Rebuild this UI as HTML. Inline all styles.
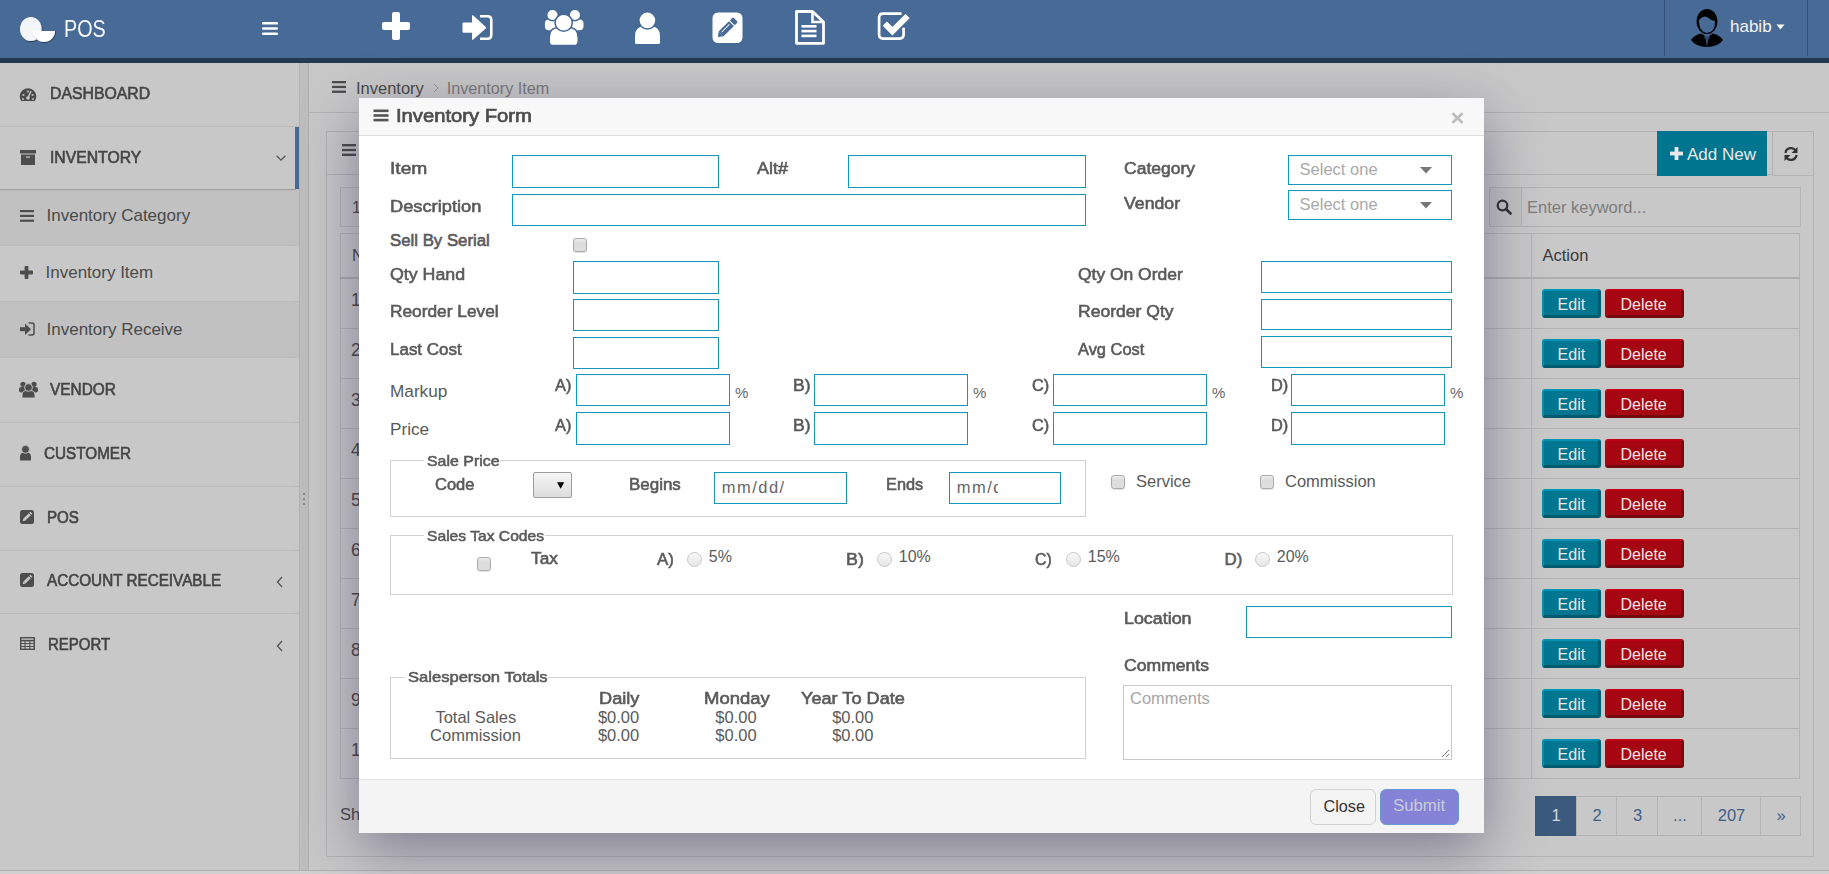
<!DOCTYPE html>
<html><head><meta charset="utf-8"><title>POS</title>
<style>
html,body{margin:0;padding:0;width:1829px;height:874px;overflow:hidden;background:#c8c8c8;font-family:"Liberation Sans",sans-serif;}
.r{position:absolute;box-sizing:border-box;}
.t{position:absolute;white-space:nowrap;line-height:1;}
</style></head><body>
<div class="r" style="left:0px;top:0px;width:1829px;height:58px;background:#476a96"></div>
<div class="r" style="left:0px;top:58px;width:1829px;height:5px;background:#243850"></div>
<svg class="r" style="left:16px;top:14px;" width="44" height="32" viewBox="0 0 44 32"><defs><filter id="sh" x="-20%" y="-20%" width="140%" height="140%"><feDropShadow dx="0.6" dy="0.8" stdDeviation="0.5" flood-color="#000" flood-opacity="0.6"/></filter></defs><ellipse cx="14.8" cy="15" rx="10.8" ry="12" fill="#f3f5f8" filter="url(#sh)"/><path d="M17 17 L39 17 A11 11 0 0 1 17 17 Z" fill="#fff" filter="url(#sh)"/></svg>
<div class="t" style="left:63.5px;top:18.1px;font-size:23.5px;font-weight:normal;color:#f6f8fb;transform:scaleX(0.84);transform-origin:0 0;">POS</div>
<svg class="r" style="left:262px;top:22px;" width="16" height="13" viewBox="0 0 16 13"><rect x="0" y="0" width="16" height="2.6" rx="1.2" fill="#fff"/><rect x="0" y="5.2" width="16" height="2.6" rx="1.2" fill="#fff"/><rect x="0" y="10.4" width="16" height="2.6" rx="1.2" fill="#fff"/></svg>
<svg class="r" style="left:382px;top:12px;" width="28" height="28" viewBox="0 0 28 28"><rect x="10" y="0" width="8" height="28" rx="2" fill="#fff"/><rect x="0" y="10" width="28" height="8" rx="2" fill="#fff"/></svg>
<svg class="r" style="left:460px;top:13px;" width="36" height="30" viewBox="0 0 36 30"><rect x="2.5" y="9.5" width="11" height="10.3" rx="1" fill="#fff"/><path d="M12.6 2.8 L25.6 14.7 L12.6 26.2 Z" fill="#fff" stroke="#fff" stroke-width="1.2" stroke-linejoin="round"/><path d="M20 3.3 H27.5 Q31.3 3.3 31.3 7.3 V21.7 Q31.3 25.7 27.5 25.7 H20" fill="none" stroke="#fff" stroke-width="2.6"/></svg>
<svg class="r" style="left:543px;top:8px;" width="42" height="40" viewBox="0 0 42 40"><rect x="1.9" y="11.5" width="11.5" height="10.8" rx="4" fill="#fff"/><rect x="29" y="11.5" width="11.5" height="10.8" rx="4" fill="#fff"/><circle cx="9.5" cy="7" r="5.8" fill="#fff" stroke="#476a96" stroke-width="1.4"/><circle cx="31.9" cy="7" r="5.8" fill="#fff" stroke="#476a96" stroke-width="1.4"/><path d="M6.2 33.2 V29.5 Q6.2 19.6 16 19.6 H25.5 Q35.2 19.6 35.2 29.5 V33.2 Q35.2 37.6 31 37.6 H10.4 Q6.2 37.6 6.2 33.2 Z" fill="#fff" stroke="#476a96" stroke-width="1.5"/><circle cx="20.7" cy="14.7" r="8.6" fill="#fff" stroke="#476a96" stroke-width="1.6"/></svg>
<svg class="r" style="left:633px;top:11px;" width="29" height="34" viewBox="0 0 29 34"><path d="M2 32 V25 Q2 15.5 11 15.5 H18 Q27 15.5 27 25 V32 Q27 33 25.5 33 H3.5 Q2 33 2 32 Z" fill="#fff"/><circle cx="14.4" cy="9.4" r="8.6" fill="#fff" stroke="#476a96" stroke-width="1.6"/></svg>
<svg class="r" style="left:712px;top:12px;" width="31" height="32" viewBox="0 0 31 32"><rect x="0.5" y="0.5" width="30" height="30.5" rx="5.5" fill="#fff"/><g transform="rotate(-45 15.5 15.5)"><rect x="6.5" y="12" width="14.5" height="7" fill="#476a96"/><rect x="22.2" y="12" width="4.6" height="7" rx="1.2" fill="#476a96"/><path d="M6.5 12 L2 15.5 L6.5 19 Z" fill="#476a96"/><rect x="8" y="14.2" width="11" height="0.9" fill="#fff"/></g></svg>
<svg class="r" style="left:794px;top:9px;" width="33" height="37" viewBox="0 0 33 37"><path d="M2.5 2.5 H18.5 L29.5 13 V34.3 H2.5 Z" fill="none" stroke="#fff" stroke-width="2.8" stroke-linejoin="round"/><path d="M18.5 2.5 V13 H29.5" fill="none" stroke="#fff" stroke-width="2.6"/><rect x="7.5" y="16" width="15" height="2.6" fill="#fff"/><rect x="7.5" y="20.8" width="15" height="2.6" fill="#fff"/><rect x="7.5" y="25.6" width="15" height="2.6" fill="#fff"/></svg>
<svg class="r" style="left:876px;top:11px;" width="36" height="31" viewBox="0 0 36 31"><path d="M25.5 2.6 H7.1 Q3.1 2.6 3.1 6.6 V23.6 Q3.1 27.6 7.1 27.6 H23.6 Q27.6 27.6 27.6 23.6 V16.8" fill="none" stroke="#fff" stroke-width="2.7"/><path d="M8.8 12.6 L16.4 20.2 L31.6 5" fill="none" stroke="#fff" stroke-width="6" stroke-linejoin="miter"/></svg>
<div class="r" style="left:1664px;top:0px;width:1px;height:56px;background:#34527a"></div>
<div class="r" style="left:1807px;top:0px;width:1px;height:56px;background:#34527a"></div>
<svg class="r" style="left:1690px;top:6px;" width="34" height="42" viewBox="0 0 34 42"><path d="M1 34 Q4 29 11 27.5 L17 31 L23 27.5 Q30 29 33 34 Q28 41 17 41 Q6 41 1 34 Z" fill="#000"/><path d="M15 30 L17 41 L19 30 Z" fill="#2e4d72"/><path d="M13.5 28 L17 31.5 L20.5 28 L19 33 L17 31.5 L15 33Z" fill="#2e4d72"/><ellipse cx="17" cy="15.5" rx="10.4" ry="12.6" fill="#000"/><path d="M9 14 Q13 9 17 11 Q21 14.5 25 15 Q25.5 26 17 27 Q8.5 26 9 14 Z" fill="#476a96"/></svg>
<div class="t" style="left:1730.0px;top:17.6px;font-size:17px;font-weight:normal;color:#f4f4f4;">habib</div>
<svg class="r" style="left:1776px;top:24px;" width="9" height="6" viewBox="0 0 9 6"><path d="M0.5 0.5 L8.5 0.5 L4.5 5.5 Z" fill="#fff"/></svg>
<div class="r" style="left:0px;top:63px;width:299px;height:811px;background:#c8c8c8"></div>
<div class="r" style="left:0px;top:126px;width:299px;height:1px;background:#bbbbbb"></div>
<div class="r" style="left:0px;top:189px;width:299px;height:56px;background:#c1c1c1"></div>
<div class="r" style="left:0px;top:301px;width:299px;height:56px;background:#c1c1c1"></div>
<div class="r" style="left:0px;top:189px;width:296px;height:1px;background:#a0a0a0"></div>
<div class="r" style="left:0px;top:190px;width:296px;height:1px;background:#bdbdbd"></div>
<div class="r" style="left:0px;top:245px;width:299px;height:1px;background:#bbbbbb"></div>
<div class="r" style="left:0px;top:301px;width:299px;height:1px;background:#bbbbbb"></div>
<div class="r" style="left:0px;top:357px;width:299px;height:1px;background:#bbbbbb"></div>
<div class="r" style="left:0px;top:422px;width:299px;height:1px;background:#bbbbbb"></div>
<div class="r" style="left:0px;top:486px;width:299px;height:1px;background:#bbbbbb"></div>
<div class="r" style="left:0px;top:550px;width:299px;height:1px;background:#bbbbbb"></div>
<div class="r" style="left:0px;top:613px;width:299px;height:1px;background:#bbbbbb"></div>
<div class="r" style="left:295px;top:127px;width:4px;height:62px;background:#476a96"></div>
<div class="r" style="left:299px;top:63px;width:1px;height:811px;background:#b4b4b4"></div>
<div class="r" style="left:300px;top:63px;width:8px;height:811px;background:#bebebe"></div>
<div class="r" style="left:308px;top:63px;width:1px;height:811px;background:#b0b0b0"></div>
<div class="r" style="left:303px;top:493px;width:2px;height:2px;background:#8a8a8a"></div>
<div class="r" style="left:303px;top:498px;width:2px;height:2px;background:#8a8a8a"></div>
<div class="r" style="left:303px;top:503px;width:2px;height:2px;background:#8a8a8a"></div>
<svg class="r" style="left:19px;top:87px;" width="18" height="15" viewBox="0 0 18 15"><path d="M2.2 14 A8.2 8.2 0 1 1 15.8 14 Z" fill="#4d4d4d"/><circle cx="9" cy="11" r="1.8" fill="#c8c8c8"/><path d="M9 11 L12 4" stroke="#c8c8c8" stroke-width="1.4"/><circle cx="4.5" cy="8" r="1" fill="#c8c8c8"/><circle cx="9" cy="4.5" r="1" fill="#c8c8c8"/><circle cx="13.5" cy="8" r="1" fill="#c8c8c8"/><circle cx="4" cy="12" r="0.9" fill="#c8c8c8"/><circle cx="14" cy="12" r="0.9" fill="#c8c8c8"/></svg>
<div class="t" style="left:49.6px;top:85.0px;font-size:17.2px;font-weight:normal;color:#454545;-webkit-text-stroke:0.65px #454545;transform:scaleX(0.9205);transform-origin:0 0;">DASHBOARD</div>
<svg class="r" style="left:20px;top:150px;" width="16" height="15" viewBox="0 0 16 15"><rect x="0" y="0" width="16" height="3.5" fill="#4d4d4d"/><rect x="1" y="4.5" width="14" height="10.5" fill="#4d4d4d"/><rect x="6" y="6.5" width="4" height="1.2" fill="#c8c8c8"/></svg>
<div class="t" style="left:49.6px;top:149.4px;font-size:17.2px;font-weight:normal;color:#454545;-webkit-text-stroke:0.65px #454545;transform:scaleX(0.9151);transform-origin:0 0;">INVENTORY</div>
<svg class="r" style="left:275px;top:154px;" width="12" height="8" viewBox="0 0 12 8"><path d="M1.6 1.8 L6 6.2 L10.4 1.8" fill="none" stroke="#555" stroke-width="1.3"/></svg>
<svg class="r" style="left:20px;top:210px;" width="14" height="12" viewBox="0 0 14 12"><rect x="0" y="0" width="14" height="2.2" fill="#4d4d4d"/><rect x="0" y="4.8" width="14" height="2.2" fill="#4d4d4d"/><rect x="0" y="9.6" width="14" height="2.2" fill="#4d4d4d"/></svg>
<div class="t" style="left:46.5px;top:207.1px;font-size:17px;font-weight:normal;color:#4a4a4a;">Inventory Category</div>
<svg class="r" style="left:20px;top:266px;" width="13" height="13" viewBox="0 0 13 13"><rect x="4.6" y="0" width="3.8" height="13" rx="0.8" fill="#4d4d4d"/><rect x="0" y="4.6" width="13" height="3.8" rx="0.8" fill="#4d4d4d"/></svg>
<div class="t" style="left:45.5px;top:264.3px;font-size:17px;font-weight:normal;color:#4a4a4a;">Inventory Item</div>
<svg class="r" style="left:19px;top:322px;" width="16" height="14" viewBox="0 0 16 14"><rect x="1" y="5.2" width="6" height="4" fill="#4d4d4d"/><path d="M6 1.5 L12 7.2 L6 13 Z" fill="#4d4d4d"/><path d="M9.5 1 H13 Q15 1 15 3 V11 Q15 13 13 13 H9.5" fill="none" stroke="#4d4d4d" stroke-width="1.5"/></svg>
<div class="t" style="left:46.5px;top:320.6px;font-size:17px;font-weight:normal;color:#4a4a4a;">Inventory Receive</div>
<svg class="r" style="left:19px;top:381px;" width="19" height="17" viewBox="0 0 19 17"><circle cx="4" cy="3.3" r="2.6" fill="#4d4d4d"/><circle cx="15" cy="3.3" r="2.6" fill="#4d4d4d"/><rect x="0" y="6" width="6.5" height="5.5" rx="2.2" fill="#4d4d4d"/><rect x="12.5" y="6" width="6.5" height="5.5" rx="2.2" fill="#4d4d4d"/><path d="M3 17 V14 Q3 9.5 8 9.5 H11 Q16 9.5 16 14 V17 Z" fill="#4d4d4d" stroke="#c8c8c8" stroke-width="0.9"/><circle cx="9.5" cy="6.5" r="3.9" fill="#4d4d4d" stroke="#c8c8c8" stroke-width="0.9"/></svg>
<div class="t" style="left:50.0px;top:380.7px;font-size:17.2px;font-weight:normal;color:#454545;-webkit-text-stroke:0.65px #454545;transform:scaleX(0.8957);transform-origin:0 0;">VENDOR</div>
<svg class="r" style="left:19px;top:445px;" width="13" height="16" viewBox="0 0 13 16"><path d="M1 15.5 V12 Q1 7.5 5 7.5 H8 Q12 7.5 12 12 V15.5 Z" fill="#4d4d4d"/><circle cx="6.5" cy="4.3" r="4" fill="#4d4d4d" stroke="#c8c8c8" stroke-width="0.9"/></svg>
<div class="t" style="left:44.0px;top:444.8px;font-size:17.2px;font-weight:normal;color:#454545;-webkit-text-stroke:0.65px #454545;transform:scaleX(0.8878);transform-origin:0 0;">CUSTOMER</div>
<svg class="r" style="left:20px;top:510px;" width="14" height="14" viewBox="0 0 14 14"><rect x="0" y="0" width="14" height="14" rx="2.5" fill="#4d4d4d"/><g transform="rotate(-45 7 7)"><rect x="3" y="5.6" width="8" height="2.8" fill="#c8c8c8"/><rect x="11.6" y="5.6" width="1.6" height="2.8" fill="#c8c8c8"/><path d="M3 5.6 L1 7 L3 8.4Z" fill="#c8c8c8"/></g></svg>
<div class="t" style="left:47.0px;top:508.6px;font-size:17.2px;font-weight:normal;color:#454545;-webkit-text-stroke:0.65px #454545;transform:scaleX(0.8804);transform-origin:0 0;">POS</div>
<svg class="r" style="left:20px;top:573px;" width="14" height="14" viewBox="0 0 14 14"><rect x="0" y="0" width="14" height="14" rx="2.5" fill="#4d4d4d"/><g transform="rotate(-45 7 7)"><rect x="3" y="5.6" width="8" height="2.8" fill="#c8c8c8"/><rect x="11.6" y="5.6" width="1.6" height="2.8" fill="#c8c8c8"/><path d="M3 5.6 L1 7 L3 8.4Z" fill="#c8c8c8"/></g></svg>
<div class="t" style="left:47.0px;top:571.9px;font-size:17.2px;font-weight:normal;color:#454545;-webkit-text-stroke:0.65px #454545;transform:scaleX(0.8883);transform-origin:0 0;">ACCOUNT RECEIVABLE</div>
<svg class="r" style="left:276px;top:639.5px;" width="8" height="12" viewBox="0 0 8 12"><path d="M6 1 L1.5 6 L6 11" fill="none" stroke="#555" stroke-width="1.3"/></svg>
<svg class="r" style="left:276px;top:575.5px;" width="8" height="12" viewBox="0 0 8 12"><path d="M6 1 L1.5 6 L6 11" fill="none" stroke="#555" stroke-width="1.3"/></svg>
<svg class="r" style="left:20px;top:637px;" width="15" height="13" viewBox="0 0 15 13"><rect x="0.7" y="0.7" width="13.6" height="11.6" fill="none" stroke="#4d4d4d" stroke-width="1.4"/><path d="M0.6 3.6 H14.4" stroke="#4d4d4d" stroke-width="1.6"/><path d="M0.6 6.6 H14.4 M0.6 9.5 H14.4 M5 3 V12.4 M9.8 3 V12.4" stroke="#4d4d4d" stroke-width="1"/></svg>
<div class="t" style="left:48.0px;top:635.9px;font-size:17.2px;font-weight:normal;color:#454545;-webkit-text-stroke:0.65px #454545;transform:scaleX(0.8735);transform-origin:0 0;">REPORT</div>
<div class="r" style="left:309px;top:63px;width:1520px;height:811px;background:#c8c8c8"></div>
<svg class="r" style="left:332px;top:81px;" width="14" height="12" viewBox="0 0 14 12"><rect x="0" y="0" width="14" height="2.3" fill="#4d4d4d"/><rect x="0" y="4.8" width="14" height="2.3" fill="#4d4d4d"/><rect x="0" y="9.6" width="14" height="2.3" fill="#4d4d4d"/></svg>
<div class="t" style="left:356.0px;top:79.5px;font-size:16.5px;font-weight:normal;color:#4a4a4a;">Inventory</div>
<svg class="r" style="left:433px;top:83px;" width="6" height="10" viewBox="0 0 6 10"><path d="M1 1 L5 5 L1 9" fill="none" stroke="#9a9a9a" stroke-width="1"/></svg>
<div class="t" style="left:446.7px;top:79.6px;font-size:16.2px;font-weight:normal;color:#7a7a7a;">Inventory Item</div>
<div class="r" style="left:309px;top:112px;width:1520px;height:1px;background:#b3b3b3"></div>
<div class="r" style="left:326px;top:131px;width:1488px;height:726px;border:1px solid #b3b3b3;"></div>
<div class="r" style="left:326px;top:174px;width:1488px;height:1px;background:#b3b3b3"></div>
<svg class="r" style="left:342px;top:144px;" width="14" height="12" viewBox="0 0 14 12"><rect x="0" y="0" width="14" height="2.4" fill="#4d4d4d"/><rect x="0" y="4.8" width="14" height="2.4" fill="#4d4d4d"/><rect x="0" y="9.6" width="14" height="2.4" fill="#4d4d4d"/></svg>
<div class="r" style="left:1657px;top:131px;width:110px;height:45px;background:#00758f"></div>
<svg class="r" style="left:1670px;top:147px;" width="13" height="13" viewBox="0 0 13 13"><rect x="4.6" y="0" width="3.8" height="13" fill="#e8e8e8"/><rect x="0" y="4.6" width="13" height="3.8" fill="#e8e8e8"/></svg>
<div class="t" style="left:1687.0px;top:146.0px;font-size:17px;font-weight:normal;color:#e8e8e8;">Add New</div>
<div class="r" style="left:1772px;top:131px;width:42px;height:45px;background:#c8c8c8;border:1px solid #b3b3b3;"></div>
<svg class="r" style="left:1783px;top:146px;" width="16" height="16" viewBox="0 0 16 16"><path d="M2.5 7 A5.5 5.5 0 0 1 12.8 5" fill="none" stroke="#333" stroke-width="2.3"/><path d="M14.5 1 V7 H8.5 Z" fill="#333"/><path d="M13.5 9 A5.5 5.5 0 0 1 3.2 11" fill="none" stroke="#333" stroke-width="2.3"/><path d="M1.5 15 V9 H7.5 Z" fill="#333"/></svg>
<div class="r" style="left:340px;top:187px;width:60px;height:40px;border:1px solid #b3b3b3;background:#c6c6c6"></div>
<div class="t" style="left:352.0px;top:199.5px;font-size:16px;font-weight:normal;color:#4a4a4a;">1</div>
<div class="r" style="left:1489px;top:187px;width:312px;height:40px;border:1px solid #b3b3b3;background:#c8c8c8"></div>
<div class="r" style="left:1489px;top:187px;width:33px;height:40px;border:1px solid #b3b3b3;background:#c3c3c3"></div>
<svg class="r" style="left:1496px;top:199px;" width="17" height="16" viewBox="0 0 17 16"><circle cx="6.5" cy="6.5" r="4.8" fill="none" stroke="#333" stroke-width="2.2"/><path d="M10 10 L14.5 14.5" stroke="#333" stroke-width="2.6" stroke-linecap="round"/></svg>
<div class="t" style="left:1527.0px;top:199.0px;font-size:16.5px;font-weight:normal;color:#7d7d7d;">Enter keyword...</div>
<div class="r" style="left:340px;top:233px;width:1460px;height:546px;border:1px solid #b3b3b3;"></div>
<div class="r" style="left:340px;top:277px;width:1460px;height:2px;background:#aeaeae"></div>
<div class="r" style="left:1531px;top:233px;width:1px;height:546px;background:#b3b3b3"></div>
<div class="t" style="left:352.0px;top:247.2px;font-size:16.5px;font-weight:normal;color:#4a4a4a;">N</div>
<div class="t" style="left:1542.5px;top:247.2px;font-size:16.5px;font-weight:normal;color:#3a3a3a;">Action</div>
<div class="t" style="left:351.0px;top:292.0px;font-size:17.5px;font-weight:normal;color:#4a4a4a;">1</div>
<div class="r" style="left:1542px;top:289px;width:59px;height:29px;background:#007690;border-radius:3px;border-style:solid;border-width:2px 3px 3px 2px;border-color:#0094b4 #005b6f #005b6f #0090b0;"></div>
<div class="t" style="left:1557.6px;top:296.5px;font-size:16px;font-weight:normal;color:#ece6e6;">Edit</div>
<div class="r" style="left:1605px;top:289px;width:79px;height:29px;background:#a60612;border-radius:3px;border-style:solid;border-width:2px 3px 3px 2px;border-color:#c00014 #730a10 #730a10 #bb0013;"></div>
<div class="t" style="left:1620.5px;top:296.5px;font-size:16px;font-weight:normal;color:#ece6e6;">Delete</div>
<div class="r" style="left:340px;top:328px;width:1460px;height:1px;background:#b3b3b3"></div>
<div class="t" style="left:351.0px;top:342.0px;font-size:17.5px;font-weight:normal;color:#4a4a4a;">2</div>
<div class="r" style="left:1542px;top:339px;width:59px;height:29px;background:#007690;border-radius:3px;border-style:solid;border-width:2px 3px 3px 2px;border-color:#0094b4 #005b6f #005b6f #0090b0;"></div>
<div class="t" style="left:1557.6px;top:346.5px;font-size:16px;font-weight:normal;color:#ece6e6;">Edit</div>
<div class="r" style="left:1605px;top:339px;width:79px;height:29px;background:#a60612;border-radius:3px;border-style:solid;border-width:2px 3px 3px 2px;border-color:#c00014 #730a10 #730a10 #bb0013;"></div>
<div class="t" style="left:1620.5px;top:346.5px;font-size:16px;font-weight:normal;color:#ece6e6;">Delete</div>
<div class="r" style="left:340px;top:378px;width:1460px;height:1px;background:#b3b3b3"></div>
<div class="t" style="left:351.0px;top:392.0px;font-size:17.5px;font-weight:normal;color:#4a4a4a;">3</div>
<div class="r" style="left:1542px;top:389px;width:59px;height:29px;background:#007690;border-radius:3px;border-style:solid;border-width:2px 3px 3px 2px;border-color:#0094b4 #005b6f #005b6f #0090b0;"></div>
<div class="t" style="left:1557.6px;top:396.5px;font-size:16px;font-weight:normal;color:#ece6e6;">Edit</div>
<div class="r" style="left:1605px;top:389px;width:79px;height:29px;background:#a60612;border-radius:3px;border-style:solid;border-width:2px 3px 3px 2px;border-color:#c00014 #730a10 #730a10 #bb0013;"></div>
<div class="t" style="left:1620.5px;top:396.5px;font-size:16px;font-weight:normal;color:#ece6e6;">Delete</div>
<div class="r" style="left:340px;top:428px;width:1460px;height:1px;background:#b3b3b3"></div>
<div class="t" style="left:351.0px;top:442.0px;font-size:17.5px;font-weight:normal;color:#4a4a4a;">4</div>
<div class="r" style="left:1542px;top:439px;width:59px;height:29px;background:#007690;border-radius:3px;border-style:solid;border-width:2px 3px 3px 2px;border-color:#0094b4 #005b6f #005b6f #0090b0;"></div>
<div class="t" style="left:1557.6px;top:446.5px;font-size:16px;font-weight:normal;color:#ece6e6;">Edit</div>
<div class="r" style="left:1605px;top:439px;width:79px;height:29px;background:#a60612;border-radius:3px;border-style:solid;border-width:2px 3px 3px 2px;border-color:#c00014 #730a10 #730a10 #bb0013;"></div>
<div class="t" style="left:1620.5px;top:446.5px;font-size:16px;font-weight:normal;color:#ece6e6;">Delete</div>
<div class="r" style="left:340px;top:478px;width:1460px;height:1px;background:#b3b3b3"></div>
<div class="t" style="left:351.0px;top:492.0px;font-size:17.5px;font-weight:normal;color:#4a4a4a;">5</div>
<div class="r" style="left:1542px;top:489px;width:59px;height:29px;background:#007690;border-radius:3px;border-style:solid;border-width:2px 3px 3px 2px;border-color:#0094b4 #005b6f #005b6f #0090b0;"></div>
<div class="t" style="left:1557.6px;top:496.5px;font-size:16px;font-weight:normal;color:#ece6e6;">Edit</div>
<div class="r" style="left:1605px;top:489px;width:79px;height:29px;background:#a60612;border-radius:3px;border-style:solid;border-width:2px 3px 3px 2px;border-color:#c00014 #730a10 #730a10 #bb0013;"></div>
<div class="t" style="left:1620.5px;top:496.5px;font-size:16px;font-weight:normal;color:#ece6e6;">Delete</div>
<div class="r" style="left:340px;top:528px;width:1460px;height:1px;background:#b3b3b3"></div>
<div class="t" style="left:351.0px;top:542.0px;font-size:17.5px;font-weight:normal;color:#4a4a4a;">6</div>
<div class="r" style="left:1542px;top:539px;width:59px;height:29px;background:#007690;border-radius:3px;border-style:solid;border-width:2px 3px 3px 2px;border-color:#0094b4 #005b6f #005b6f #0090b0;"></div>
<div class="t" style="left:1557.6px;top:546.5px;font-size:16px;font-weight:normal;color:#ece6e6;">Edit</div>
<div class="r" style="left:1605px;top:539px;width:79px;height:29px;background:#a60612;border-radius:3px;border-style:solid;border-width:2px 3px 3px 2px;border-color:#c00014 #730a10 #730a10 #bb0013;"></div>
<div class="t" style="left:1620.5px;top:546.5px;font-size:16px;font-weight:normal;color:#ece6e6;">Delete</div>
<div class="r" style="left:340px;top:578px;width:1460px;height:1px;background:#b3b3b3"></div>
<div class="t" style="left:351.0px;top:592.0px;font-size:17.5px;font-weight:normal;color:#4a4a4a;">7</div>
<div class="r" style="left:1542px;top:589px;width:59px;height:29px;background:#007690;border-radius:3px;border-style:solid;border-width:2px 3px 3px 2px;border-color:#0094b4 #005b6f #005b6f #0090b0;"></div>
<div class="t" style="left:1557.6px;top:596.5px;font-size:16px;font-weight:normal;color:#ece6e6;">Edit</div>
<div class="r" style="left:1605px;top:589px;width:79px;height:29px;background:#a60612;border-radius:3px;border-style:solid;border-width:2px 3px 3px 2px;border-color:#c00014 #730a10 #730a10 #bb0013;"></div>
<div class="t" style="left:1620.5px;top:596.5px;font-size:16px;font-weight:normal;color:#ece6e6;">Delete</div>
<div class="r" style="left:340px;top:628px;width:1460px;height:1px;background:#b3b3b3"></div>
<div class="t" style="left:351.0px;top:642.0px;font-size:17.5px;font-weight:normal;color:#4a4a4a;">8</div>
<div class="r" style="left:1542px;top:639px;width:59px;height:29px;background:#007690;border-radius:3px;border-style:solid;border-width:2px 3px 3px 2px;border-color:#0094b4 #005b6f #005b6f #0090b0;"></div>
<div class="t" style="left:1557.6px;top:646.5px;font-size:16px;font-weight:normal;color:#ece6e6;">Edit</div>
<div class="r" style="left:1605px;top:639px;width:79px;height:29px;background:#a60612;border-radius:3px;border-style:solid;border-width:2px 3px 3px 2px;border-color:#c00014 #730a10 #730a10 #bb0013;"></div>
<div class="t" style="left:1620.5px;top:646.5px;font-size:16px;font-weight:normal;color:#ece6e6;">Delete</div>
<div class="r" style="left:340px;top:678px;width:1460px;height:1px;background:#b3b3b3"></div>
<div class="t" style="left:351.0px;top:692.0px;font-size:17.5px;font-weight:normal;color:#4a4a4a;">9</div>
<div class="r" style="left:1542px;top:689px;width:59px;height:29px;background:#007690;border-radius:3px;border-style:solid;border-width:2px 3px 3px 2px;border-color:#0094b4 #005b6f #005b6f #0090b0;"></div>
<div class="t" style="left:1557.6px;top:696.5px;font-size:16px;font-weight:normal;color:#ece6e6;">Edit</div>
<div class="r" style="left:1605px;top:689px;width:79px;height:29px;background:#a60612;border-radius:3px;border-style:solid;border-width:2px 3px 3px 2px;border-color:#c00014 #730a10 #730a10 #bb0013;"></div>
<div class="t" style="left:1620.5px;top:696.5px;font-size:16px;font-weight:normal;color:#ece6e6;">Delete</div>
<div class="r" style="left:340px;top:728px;width:1460px;height:1px;background:#b3b3b3"></div>
<div class="t" style="left:351.0px;top:742.0px;font-size:17.5px;font-weight:normal;color:#4a4a4a;">1</div>
<div class="r" style="left:1542px;top:739px;width:59px;height:29px;background:#007690;border-radius:3px;border-style:solid;border-width:2px 3px 3px 2px;border-color:#0094b4 #005b6f #005b6f #0090b0;"></div>
<div class="t" style="left:1557.6px;top:746.5px;font-size:16px;font-weight:normal;color:#ece6e6;">Edit</div>
<div class="r" style="left:1605px;top:739px;width:79px;height:29px;background:#a60612;border-radius:3px;border-style:solid;border-width:2px 3px 3px 2px;border-color:#c00014 #730a10 #730a10 #bb0013;"></div>
<div class="t" style="left:1620.5px;top:746.5px;font-size:16px;font-weight:normal;color:#ece6e6;">Delete</div>
<div class="t" style="left:340.0px;top:806.0px;font-size:16.5px;font-weight:normal;color:#4a4a4a;">Showing</div>
<div class="r" style="left:1535px;top:796px;width:42px;height:40px;background:#3b5a7e;border:1px solid #3b5a7e"></div>
<div class="t" style="left:1535px;top:807px;width:42px;text-align:center;font-size:16.5px;color:#d3d9e1">1</div>
<div class="r" style="left:1576px;top:796px;width:41px;height:40px;border:1px solid #b3b3b3;background:#c8c8c8"></div>
<div class="t" style="left:1577px;top:807px;width:40px;text-align:center;font-size:16.5px;color:#3d5f87">2</div>
<div class="r" style="left:1616px;top:796px;width:42px;height:40px;border:1px solid #b3b3b3;background:#c8c8c8"></div>
<div class="t" style="left:1617px;top:807px;width:41px;text-align:center;font-size:16.5px;color:#3d5f87">3</div>
<div class="r" style="left:1657px;top:796px;width:45px;height:40px;border:1px solid #b3b3b3;background:#c8c8c8"></div>
<div class="t" style="left:1658px;top:807px;width:44px;text-align:center;font-size:16.5px;color:#3d5f87">...</div>
<div class="r" style="left:1701px;top:796px;width:60px;height:40px;border:1px solid #b3b3b3;background:#c8c8c8"></div>
<div class="t" style="left:1702px;top:807px;width:59px;text-align:center;font-size:16.5px;color:#3d5f87">207</div>
<div class="r" style="left:1760px;top:796px;width:41px;height:40px;border:1px solid #b3b3b3;background:#c8c8c8"></div>
<div class="t" style="left:1761px;top:807px;width:40px;text-align:center;font-size:16.5px;color:#3d5f87">»</div>
<div class="r" style="left:0px;top:870px;width:1829px;height:1px;background:#b0b0b0"></div>
<div class="r" style="left:0px;top:871px;width:1829px;height:3px;background:#d0d0d0"></div>
<div class="r" style="left:359px;top:98px;width:1125px;height:735px;background:#fff;box-shadow:0 18px 55px 0 rgba(30,25,70,0.42);"></div>
<div class="r" style="left:359px;top:98px;width:1125px;height:37px;background:#f8f8f8"></div>
<div class="r" style="left:359px;top:135px;width:1125px;height:1px;background:#dcdcdc"></div>
<svg class="r" style="left:373px;top:109px;" width="16" height="13" viewBox="0 0 16 13"><rect x="0.5" y="0.5" width="15" height="2.6" fill="#555"/><rect x="0.5" y="5.2" width="15" height="2.6" fill="#555"/><rect x="0.5" y="9.8" width="15" height="2.6" fill="#555"/></svg>
<div class="t" style="left:396.0px;top:107.1px;font-size:18.8px;font-weight:normal;color:#4d4d4d;-webkit-text-stroke:0.7px #4d4d4d;transform:scaleX(1.076);transform-origin:0 0;">Inventory Form</div>
<svg class="r" style="left:1451px;top:112px;" width="13" height="12" viewBox="0 0 13 12"><path d="M1.5 1.2 L11.5 10.8 M11.5 1.2 L1.5 10.8" stroke="#bcbcbc" stroke-width="2.6"/></svg>
<div class="r" style="left:359px;top:779px;width:1125px;height:54px;background:#f4f4f4"></div>
<div class="r" style="left:359px;top:779px;width:1125px;height:1px;background:#e4e4e4"></div>
<div class="t" style="left:390.0px;top:161.1px;font-size:16.8px;font-weight:normal;color:#5a5a5a;-webkit-text-stroke:0.6px #5a5a5a;transform:scaleX(1.1455);transform-origin:0 0;">Item</div>
<div class="r" style="left:512px;top:155px;width:207px;height:33px;border:1px solid #1497bd;background:#fff;box-shadow:inset 0 1px 1px rgba(0,0,0,0.04);"></div>
<div class="t" style="left:757.0px;top:161.2px;font-size:16.8px;font-weight:normal;color:#5a5a5a;-webkit-text-stroke:0.6px #5a5a5a;transform:scaleX(1.069);transform-origin:0 0;">Alt#</div>
<div class="r" style="left:848px;top:155px;width:238px;height:33px;border:1px solid #1497bd;background:#fff;box-shadow:inset 0 1px 1px rgba(0,0,0,0.04);"></div>
<div class="t" style="left:1123.7px;top:160.9px;font-size:16.8px;font-weight:normal;color:#5a5a5a;-webkit-text-stroke:0.6px #5a5a5a;transform:scaleX(1.0443);transform-origin:0 0;">Category</div>
<div class="r" style="left:1288px;top:155px;width:164px;height:30px;border:1px solid #1497bd;background:#fff;box-shadow:inset 0 1px 1px rgba(0,0,0,0.04);"></div>
<div class="t" style="left:390.0px;top:198.6px;font-size:16.8px;font-weight:normal;color:#5a5a5a;-webkit-text-stroke:0.6px #5a5a5a;transform:scaleX(1.0878);transform-origin:0 0;">Description</div>
<div class="r" style="left:512px;top:194px;width:574px;height:32px;border:1px solid #1497bd;background:#fff;box-shadow:inset 0 1px 1px rgba(0,0,0,0.04);"></div>
<div class="t" style="left:1123.7px;top:195.6px;font-size:16.8px;font-weight:normal;color:#5a5a5a;-webkit-text-stroke:0.6px #5a5a5a;transform:scaleX(1.0549);transform-origin:0 0;">Vendor</div>
<div class="r" style="left:1288px;top:190px;width:164px;height:30px;border:1px solid #1497bd;background:#fff;box-shadow:inset 0 1px 1px rgba(0,0,0,0.04);"></div>
<div class="t" style="left:1299.6px;top:160.6px;font-size:16.5px;font-weight:normal;color:#a9a9a9;">Select one</div>
<svg class="r" style="left:1420px;top:167px;" width="12" height="7" viewBox="0 0 12 7"><path d="M0 0 H12 L6 6.5 Z" fill="#777"/></svg>
<div class="t" style="left:1299.6px;top:195.6px;font-size:16.5px;font-weight:normal;color:#a9a9a9;">Select one</div>
<svg class="r" style="left:1420px;top:202px;" width="12" height="7" viewBox="0 0 12 7"><path d="M0 0 H12 L6 6.5 Z" fill="#777"/></svg>
<div class="t" style="left:390.0px;top:232.6px;font-size:16.8px;font-weight:normal;color:#5a5a5a;-webkit-text-stroke:0.6px #5a5a5a;transform:scaleX(1.0);transform-origin:0 0;">Sell By Serial</div>
<div class="r" style="left:573px;top:238px;width:14px;height:14px;border:1px solid #ababab;border-radius:3px;background:linear-gradient(#ececec,#dcdcdc 35%,#dedede);box-shadow:0 1px 1px rgba(0,0,0,0.12)"></div>
<div class="t" style="left:390.0px;top:267.0px;font-size:16.8px;font-weight:normal;color:#5a5a5a;-webkit-text-stroke:0.6px #5a5a5a;transform:scaleX(1.0595);transform-origin:0 0;">Qty Hand</div>
<div class="r" style="left:573px;top:261px;width:146px;height:33px;border:1px solid #1497bd;background:#fff;box-shadow:inset 0 1px 1px rgba(0,0,0,0.04);"></div>
<div class="t" style="left:1077.8px;top:267.1px;font-size:16.8px;font-weight:normal;color:#5a5a5a;-webkit-text-stroke:0.6px #5a5a5a;transform:scaleX(1.0396);transform-origin:0 0;">Qty On Order</div>
<div class="r" style="left:1261px;top:261px;width:191px;height:32px;border:1px solid #1497bd;background:#fff;box-shadow:inset 0 1px 1px rgba(0,0,0,0.04);"></div>
<div class="t" style="left:390.0px;top:303.6px;font-size:16.8px;font-weight:normal;color:#5a5a5a;-webkit-text-stroke:0.6px #5a5a5a;transform:scaleX(1.0308);transform-origin:0 0;">Reorder Level</div>
<div class="r" style="left:573px;top:299px;width:146px;height:32px;border:1px solid #1497bd;background:#fff;box-shadow:inset 0 1px 1px rgba(0,0,0,0.04);"></div>
<div class="t" style="left:1077.8px;top:303.6px;font-size:16.8px;font-weight:normal;color:#5a5a5a;-webkit-text-stroke:0.6px #5a5a5a;transform:scaleX(1.0456);transform-origin:0 0;">Reorder Qty</div>
<div class="r" style="left:1261px;top:299px;width:191px;height:31px;border:1px solid #1497bd;background:#fff;box-shadow:inset 0 1px 1px rgba(0,0,0,0.04);"></div>
<div class="t" style="left:390.0px;top:341.6px;font-size:16.8px;font-weight:normal;color:#5a5a5a;-webkit-text-stroke:0.6px #5a5a5a;transform:scaleX(1.0115);transform-origin:0 0;">Last Cost</div>
<div class="r" style="left:573px;top:337px;width:146px;height:32px;border:1px solid #1497bd;background:#fff;box-shadow:inset 0 1px 1px rgba(0,0,0,0.04);"></div>
<div class="t" style="left:1077.8px;top:341.6px;font-size:16.8px;font-weight:normal;color:#5a5a5a;-webkit-text-stroke:0.6px #5a5a5a;transform:scaleX(0.978);transform-origin:0 0;">Avg Cost</div>
<div class="r" style="left:1261px;top:336px;width:191px;height:32px;border:1px solid #1497bd;background:#fff;box-shadow:inset 0 1px 1px rgba(0,0,0,0.04);"></div>
<div class="t" style="left:390.0px;top:383.4px;font-size:17.2px;font-weight:normal;color:#5a5a5a;">Markup</div>
<div class="t" style="left:390.0px;top:421.4px;font-size:17.2px;font-weight:normal;color:#5a5a5a;">Price</div>
<div class="t" style="left:554.5px;top:378.4px;font-size:16.8px;font-weight:normal;color:#5a5a5a;-webkit-text-stroke:0.6px #5a5a5a;transform:scaleX(0.9736);transform-origin:0 0;">A)</div>
<div class="r" style="left:576px;top:374px;width:154px;height:32px;border:1px solid #1497bd;background:#fff;box-shadow:inset 0 1px 1px rgba(0,0,0,0.04);"></div>
<div class="t" style="left:735.0px;top:385.1px;font-size:15px;font-weight:normal;color:#666;">%</div>
<div class="t" style="left:554.5px;top:417.9px;font-size:16.8px;font-weight:normal;color:#5a5a5a;-webkit-text-stroke:0.6px #5a5a5a;transform:scaleX(0.9736);transform-origin:0 0;">A)</div>
<div class="r" style="left:576px;top:412px;width:154px;height:33px;border:1px solid #1497bd;background:#fff;box-shadow:inset 0 1px 1px rgba(0,0,0,0.04);"></div>
<div class="t" style="left:793.4px;top:378.4px;font-size:16.8px;font-weight:normal;color:#5a5a5a;-webkit-text-stroke:0.6px #5a5a5a;transform:scaleX(1.043);transform-origin:0 0;">B)</div>
<div class="r" style="left:814px;top:374px;width:154px;height:32px;border:1px solid #1497bd;background:#fff;box-shadow:inset 0 1px 1px rgba(0,0,0,0.04);"></div>
<div class="t" style="left:973.0px;top:385.1px;font-size:15px;font-weight:normal;color:#666;">%</div>
<div class="t" style="left:793.4px;top:417.9px;font-size:16.8px;font-weight:normal;color:#5a5a5a;-webkit-text-stroke:0.6px #5a5a5a;transform:scaleX(1.043);transform-origin:0 0;">B)</div>
<div class="r" style="left:814px;top:412px;width:154px;height:33px;border:1px solid #1497bd;background:#fff;box-shadow:inset 0 1px 1px rgba(0,0,0,0.04);"></div>
<div class="t" style="left:1032.3px;top:378.4px;font-size:16.8px;font-weight:normal;color:#5a5a5a;-webkit-text-stroke:0.6px #5a5a5a;transform:scaleX(0.9698);transform-origin:0 0;">C)</div>
<div class="r" style="left:1053px;top:374px;width:154px;height:32px;border:1px solid #1497bd;background:#fff;box-shadow:inset 0 1px 1px rgba(0,0,0,0.04);"></div>
<div class="t" style="left:1212.0px;top:385.1px;font-size:15px;font-weight:normal;color:#666;">%</div>
<div class="t" style="left:1032.3px;top:417.9px;font-size:16.8px;font-weight:normal;color:#5a5a5a;-webkit-text-stroke:0.6px #5a5a5a;transform:scaleX(0.9698);transform-origin:0 0;">C)</div>
<div class="r" style="left:1053px;top:412px;width:154px;height:33px;border:1px solid #1497bd;background:#fff;box-shadow:inset 0 1px 1px rgba(0,0,0,0.04);"></div>
<div class="t" style="left:1270.5px;top:378.4px;font-size:16.8px;font-weight:normal;color:#5a5a5a;-webkit-text-stroke:0.6px #5a5a5a;transform:scaleX(0.9735);transform-origin:0 0;">D)</div>
<div class="r" style="left:1291px;top:374px;width:154px;height:32px;border:1px solid #1497bd;background:#fff;box-shadow:inset 0 1px 1px rgba(0,0,0,0.04);"></div>
<div class="t" style="left:1450.0px;top:385.1px;font-size:15px;font-weight:normal;color:#666;">%</div>
<div class="t" style="left:1270.5px;top:417.9px;font-size:16.8px;font-weight:normal;color:#5a5a5a;-webkit-text-stroke:0.6px #5a5a5a;transform:scaleX(0.9735);transform-origin:0 0;">D)</div>
<div class="r" style="left:1291px;top:412px;width:154px;height:33px;border:1px solid #1497bd;background:#fff;box-shadow:inset 0 1px 1px rgba(0,0,0,0.04);"></div>
<div class="r" style="left:390px;top:460px;width:696px;height:57px;border:1px solid #d3d0d3"></div>
<div class="r" style="left:424px;top:455px;width:76px;height:8px;background:#fff"></div>
<div class="t" style="left:426.5px;top:453.9px;font-size:14.6px;font-weight:normal;color:#5a5a5a;-webkit-text-stroke:0.55px #5a5a5a;transform:scaleX(1.0911);transform-origin:0 0;">Sale Price</div>
<div class="t" style="left:434.6px;top:476.8px;font-size:16.8px;font-weight:normal;color:#5a5a5a;-webkit-text-stroke:0.6px #5a5a5a;transform:scaleX(0.981);transform-origin:0 0;">Code</div>
<div class="r" style="left:533px;top:472px;width:39px;height:26px;border:1px solid #9c9c9c;border-radius:2px;background:linear-gradient(#f6f6f6,#dddddd)"></div>
<svg class="r" style="left:557px;top:482px;" width="8" height="8" viewBox="0 0 8 8"><path d="M0 0.2 H7.2 L3.6 6.8 Z" fill="#000"/></svg>
<div class="t" style="left:629.3px;top:477.1px;font-size:16.8px;font-weight:normal;color:#5a5a5a;-webkit-text-stroke:0.6px #5a5a5a;transform:scaleX(1.0101);transform-origin:0 0;">Begins</div>
<div class="r" style="left:714px;top:472px;width:133px;height:32px;border:1px solid #1497bd;background:#fff;box-shadow:inset 0 1px 1px rgba(0,0,0,0.04);"></div>
<div class="t" style="left:721.7px;top:479.0px;width:62px;overflow:hidden;font-size:16.5px;color:#666;letter-spacing:1.5px">mm/dd/</div>
<div class="t" style="left:885.7px;top:477.1px;font-size:16.8px;font-weight:normal;color:#5a5a5a;-webkit-text-stroke:0.6px #5a5a5a;transform:scaleX(0.973);transform-origin:0 0;">Ends</div>
<div class="r" style="left:949px;top:472px;width:112px;height:32px;border:1px solid #1497bd;background:#fff;box-shadow:inset 0 1px 1px rgba(0,0,0,0.04);"></div>
<div class="t" style="left:956.8px;top:479.0px;width:41px;overflow:hidden;font-size:16.5px;color:#666;letter-spacing:1.5px">mm/dd/</div>
<div class="r" style="left:1111px;top:475px;width:14px;height:14px;border:1px solid #ababab;border-radius:3px;background:linear-gradient(#ececec,#dcdcdc 35%,#dedede);box-shadow:0 1px 1px rgba(0,0,0,0.12)"></div>
<div class="t" style="left:1136.0px;top:473.2px;font-size:16.5px;font-weight:normal;color:#5a5a5a;">Service</div>
<div class="r" style="left:1260px;top:475px;width:14px;height:14px;border:1px solid #ababab;border-radius:3px;background:linear-gradient(#ececec,#dcdcdc 35%,#dedede);box-shadow:0 1px 1px rgba(0,0,0,0.12)"></div>
<div class="t" style="left:1285.0px;top:473.2px;font-size:16.5px;font-weight:normal;color:#5a5a5a;">Commission</div>
<div class="r" style="left:390px;top:535px;width:1063px;height:60px;border:1px solid #d3d0d3"></div>
<div class="r" style="left:424px;top:530px;width:121px;height:8px;background:#fff"></div>
<div class="t" style="left:426.5px;top:528.6px;font-size:14.6px;font-weight:normal;color:#5a5a5a;-webkit-text-stroke:0.55px #5a5a5a;transform:scaleX(1.0717);transform-origin:0 0;">Sales Tax Codes</div>
<div class="r" style="left:477px;top:557px;width:14px;height:14px;border:1px solid #ababab;border-radius:3px;background:linear-gradient(#ececec,#dcdcdc 35%,#dedede);box-shadow:0 1px 1px rgba(0,0,0,0.12)"></div>
<div class="t" style="left:530.8px;top:551.3px;font-size:16.8px;font-weight:normal;color:#5a5a5a;-webkit-text-stroke:0.6px #5a5a5a;transform:scaleX(1.0312);transform-origin:0 0;">Tax</div>
<div class="t" style="left:656.6px;top:551.6px;font-size:16.8px;font-weight:normal;color:#5a5a5a;-webkit-text-stroke:0.6px #5a5a5a;transform:scaleX(1.0039);transform-origin:0 0;">A)</div>
<div class="r" style="left:687px;top:552px;width:15px;height:15px;border:1px solid #c8c8c8;border-radius:50%;background:linear-gradient(#f8f8f8,#e6e6e6)"></div>
<div class="t" style="left:708.8px;top:548.9px;font-size:16px;font-weight:normal;color:#5a5a5a;">5%</div>
<div class="t" style="left:846.0px;top:551.6px;font-size:16.8px;font-weight:normal;color:#5a5a5a;-webkit-text-stroke:0.6px #5a5a5a;transform:scaleX(1.0667);transform-origin:0 0;">B)</div>
<div class="r" style="left:877px;top:552px;width:15px;height:15px;border:1px solid #c8c8c8;border-radius:50%;background:linear-gradient(#f8f8f8,#e6e6e6)"></div>
<div class="t" style="left:898.8px;top:548.9px;font-size:16px;font-weight:normal;color:#5a5a5a;">10%</div>
<div class="t" style="left:1034.7px;top:551.6px;font-size:16.8px;font-weight:normal;color:#5a5a5a;-webkit-text-stroke:0.6px #5a5a5a;transform:scaleX(0.9412);transform-origin:0 0;">C)</div>
<div class="r" style="left:1066px;top:552px;width:15px;height:15px;border:1px solid #c8c8c8;border-radius:50%;background:linear-gradient(#f8f8f8,#e6e6e6)"></div>
<div class="t" style="left:1087.8px;top:548.9px;font-size:16px;font-weight:normal;color:#5a5a5a;">15%</div>
<div class="t" style="left:1224.6px;top:551.6px;font-size:16.8px;font-weight:normal;color:#5a5a5a;-webkit-text-stroke:0.6px #5a5a5a;transform:scaleX(1.0);transform-origin:0 0;">D)</div>
<div class="r" style="left:1255px;top:552px;width:15px;height:15px;border:1px solid #c8c8c8;border-radius:50%;background:linear-gradient(#f8f8f8,#e6e6e6)"></div>
<div class="t" style="left:1276.8px;top:548.9px;font-size:16px;font-weight:normal;color:#5a5a5a;">20%</div>
<div class="t" style="left:1123.7px;top:610.9px;font-size:16.8px;font-weight:normal;color:#5a5a5a;-webkit-text-stroke:0.6px #5a5a5a;transform:scaleX(1.0643);transform-origin:0 0;">Location</div>
<div class="r" style="left:1246px;top:606px;width:206px;height:32px;border:1px solid #1497bd;background:#fff;box-shadow:inset 0 1px 1px rgba(0,0,0,0.04);"></div>
<div class="t" style="left:1123.7px;top:658.2px;font-size:16.8px;font-weight:normal;color:#5a5a5a;-webkit-text-stroke:0.6px #5a5a5a;transform:scaleX(1.0483);transform-origin:0 0;">Comments</div>
<div class="r" style="left:1123px;top:685px;width:329px;height:75px;border:1px solid #c9c9c9;background:#fff"></div>
<div class="t" style="left:1130.0px;top:690.4px;font-size:16.5px;font-weight:normal;color:#a6a6a6;">Comments</div>
<svg class="r" style="left:1440px;top:748px;" width="10" height="10" viewBox="0 0 10 10"><path d="M2 9 L9 2 M6 9 L9 6" stroke="#777" stroke-width="1"/></svg>
<div class="r" style="left:390px;top:677px;width:696px;height:82px;border:1px solid #d3d0d3"></div>
<div class="r" style="left:405px;top:672px;width:143px;height:8px;background:#fff"></div>
<div class="t" style="left:407.8px;top:670.0px;font-size:14.6px;font-weight:normal;color:#5a5a5a;-webkit-text-stroke:0.55px #5a5a5a;transform:scaleX(1.135);transform-origin:0 0;">Salesperson Totals</div>
<div class="t" style="left:599.0px;top:690.1px;font-size:16.4px;font-weight:normal;color:#5a5a5a;-webkit-text-stroke:0.6px #5a5a5a;transform:scaleX(1.1111);transform-origin:0 0;">Daily</div>
<div class="t" style="left:703.7px;top:690.1px;font-size:16.4px;font-weight:normal;color:#5a5a5a;-webkit-text-stroke:0.6px #5a5a5a;transform:scaleX(1.1265);transform-origin:0 0;">Monday</div>
<div class="t" style="left:801.0px;top:690.1px;font-size:16.4px;font-weight:normal;color:#5a5a5a;-webkit-text-stroke:0.6px #5a5a5a;transform:scaleX(1.1064);transform-origin:0 0;">Year To Date</div>
<div class="t" style="left:375.8px;width:200px;text-align:center;top:709.0px;font-size:16.5px;font-weight:normal;color:#5a5a5a;letter-spacing:0px">Total Sales</div>
<div class="t" style="left:375.5px;width:200px;text-align:center;top:727.0px;font-size:16.5px;font-weight:normal;color:#5a5a5a;letter-spacing:0px">Commission</div>
<div class="t" style="left:518.6px;width:200px;text-align:center;top:709.0px;font-size:16.5px;font-weight:normal;color:#5a5a5a;letter-spacing:0px">$0.00</div>
<div class="t" style="left:518.6px;width:200px;text-align:center;top:727.0px;font-size:16.5px;font-weight:normal;color:#5a5a5a;letter-spacing:0px">$0.00</div>
<div class="t" style="left:636.0px;width:200px;text-align:center;top:709.0px;font-size:16.5px;font-weight:normal;color:#5a5a5a;letter-spacing:0px">$0.00</div>
<div class="t" style="left:636.0px;width:200px;text-align:center;top:727.0px;font-size:16.5px;font-weight:normal;color:#5a5a5a;letter-spacing:0px">$0.00</div>
<div class="t" style="left:752.8px;width:200px;text-align:center;top:709.0px;font-size:16.5px;font-weight:normal;color:#5a5a5a;letter-spacing:0px">$0.00</div>
<div class="t" style="left:752.8px;width:200px;text-align:center;top:727.0px;font-size:16.5px;font-weight:normal;color:#5a5a5a;letter-spacing:0px">$0.00</div>
<div class="r" style="left:1310px;top:789px;width:66px;height:36px;border:1px solid #d2d2d2;border-radius:6px;background:#f4f4f4"></div>
<div class="t" style="left:1323.5px;top:798.3px;font-size:16.2px;font-weight:normal;color:#333;">Close</div>
<div class="r" style="left:1380px;top:789px;width:79px;height:36px;border-radius:6px;background:#8583d8;border:1px solid #6d9ad2"></div>
<div class="t" style="left:1393.0px;top:798.4px;font-size:16.8px;font-weight:normal;color:#cacad6;">Submit</div>
</body></html>
